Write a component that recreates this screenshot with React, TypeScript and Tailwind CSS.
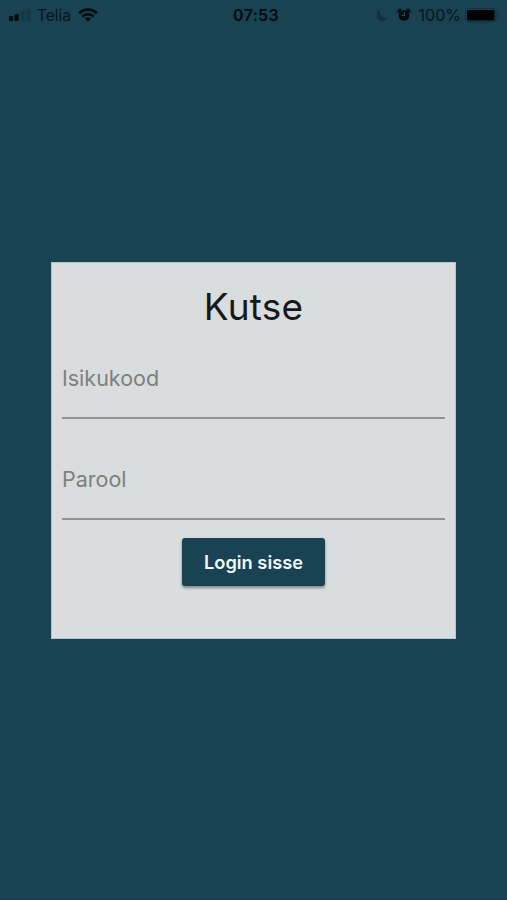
import { useState } from "react";

function SignalIcon() {
  return (
    <svg width="23" height="12" viewBox="0 0 23 12">
      <rect x="0" y="7" width="4.2" height="5" rx="1" fill="#020b10" />
      <rect x="5.5" y="5" width="4.2" height="7" rx="1" fill="#020b10" />
      <rect x="11.5" y="2.5" width="4.2" height="9.5" rx="1" fill="#143846" />
      <rect x="17.5" y="0" width="4.2" height="12" rx="1" fill="#143846" />
    </svg>
  );
}

function WifiIcon() {
  return (
    <svg width="20" height="14" viewBox="0 0 20 14" fill="none" stroke="#020b10">
      <path d="M1.2 5.2a12.5 12.5 0 0 1 17.6 0" strokeWidth="2.7" />
      <path d="M4.4 8.6a8 8 0 0 1 11.2 0" strokeWidth="2.5" />
      <path d="M10 13.8 6.8 10.6a4.6 4.6 0 0 1 6.4 0Z" fill="#020b10" stroke="none" />
    </svg>
  );
}

function MoonIcon() {
  return (
    <svg width="11" height="12" viewBox="0 0 11 12">
      <path d="M3.4 0.4a6 6 0 1 0 7.4 8A5.9 5.9 0 0 1 3.4 0.4Z" fill="#123240" />
    </svg>
  );
}

function AlarmIcon() {
  return (
    <svg width="14" height="14" viewBox="0 0 14 14" fill="none" strokeLinecap="round">
      <path d="M1.5 3.2 3.3 1.8M12.5 3.2 10.7 1.8" stroke="#020b10" strokeWidth="2.4" />
      <circle cx="7" cy="7.4" r="5.4" fill="#020b10" />
      <path d="M7.4 4.6v3.1H5" stroke="#2b5a6a" strokeWidth="1" />
    </svg>
  );
}

function BatteryIcon() {
  return (
    <svg width="35" height="15" viewBox="0 0 35 15">
      <rect x="0.5" y="0.5" width="30.5" height="13.5" rx="3" fill="none" stroke="#11323f" />
      <rect x="2" y="2" width="27.5" height="10.5" rx="1.5" fill="#000205" />
      <path d="M32.5 5v4.8a2.7 2.7 0 0 0 0-4.8Z" fill="#11323f" />
    </svg>
  );
}

function StatusBar() {
  return (
    <div className="grid h-[30px] grid-cols-[1fr_auto_1fr] items-center pr-[7px] pl-[9px] text-[16px] leading-none text-[#06161e]">
      <div className="flex items-center">
        <SignalIcon />
        <span className="ml-[5px] pt-px text-[15.5px]">Telia</span>
        <span className="ml-[7px]">
          <WifiIcon />
        </span>
      </div>
      <span className="pl-[3px] font-semibold tracking-[0.3px] text-[#020b10]">07:53</span>
      <div className="flex items-center justify-end">
        <MoonIcon />
        <span className="ml-[9px]">
          <AlarmIcon />
        </span>
        <span className="ml-[8px]">100%</span>
        <span className="ml-[4px]">
          <BatteryIcon />
        </span>
      </div>
    </div>
  );
}

type FieldProps = {
  label: string;
  type: string;
  value: string;
  onChange: (value: string) => void;
};

function Field({ label, type, value, onChange }: FieldProps) {
  return (
    <input
      type={type}
      aria-label={label}
      placeholder={label}
      value={value}
      onChange={(e) => onChange(e.target.value)}
      className="block h-[81px] w-full rounded-none border-b-2 border-[#8f9495] bg-transparent text-[21.5px] text-[#1b1f21] outline-none placeholder:text-[#7b8081]"
    />
  );
}

export default function App() {
  const [code, setCode] = useState("");
  const [password, setPassword] = useState("");

  return (
    <div className="flex h-[900px] w-full flex-col border-b border-[#143a55] bg-[#194252] font-['Inter',sans-serif]">
      <StatusBar />
      <form
        onSubmit={(e) => e.preventDefault()}
        className="mx-auto mt-[232px] h-[377px] w-[405px] border border-[#b4c5cb] bg-[#d9dddd] px-[10px] pt-[20px]"
      >
        <h1 className="text-center text-[37px] leading-[48px] font-normal tracking-[0.2px] text-[#15191b]">
          Kutse
        </h1>
        <div className="mt-[7px]">
          <Field label="Isikukood" type="text" value={code} onChange={setCode} />
        </div>
        <div className="mt-[20px]">
          <Field label="Parool" type="password" value={password} onChange={setPassword} />
        </div>
        <button
          type="submit"
          className="mx-auto mt-[18px] block h-12 w-[143px] rounded-[3px] bg-[#194252] pt-px text-[18.25px] font-semibold text-[#f0f8fa] shadow-[0_2px_3px_rgba(0,0,0,0.4)]"
        >
          Login sisse
        </button>
      </form>
    </div>
  );
}
